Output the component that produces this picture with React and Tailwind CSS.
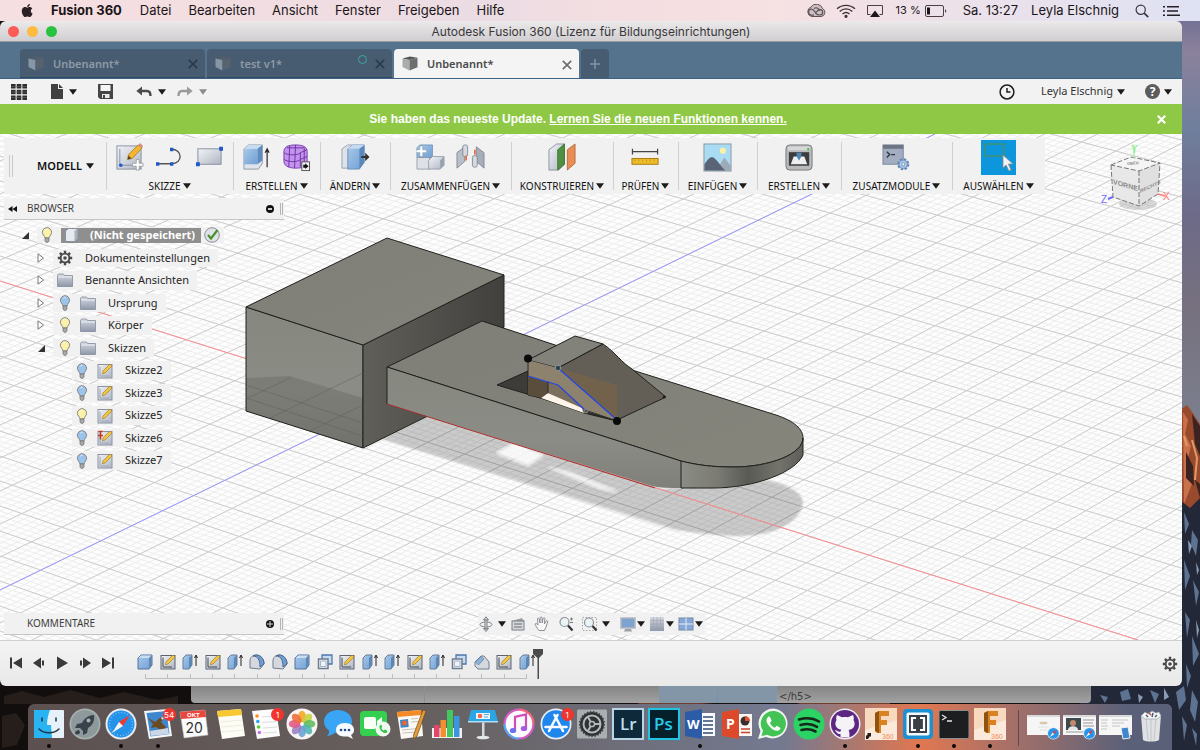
import React from "react";

const UI = "font-['Noto_Sans','Open_Sans',sans-serif]";
const MAC = "font-[Inter,'Liberation_Sans',sans-serif]";

function Caret({ className = "fill-[#1c1c1c]" }) {
  return (
    <svg viewBox="0 0 8 6" className={`w-2 h-1.5 shrink-0 ${className}`} aria-hidden="true">
      <path d="M0 0.3H8L4 5.8Z" />
    </svg>
  );
}

/* ------------------------------------------------------------ wallpaper */

function Wallpaper() {
  return (
    <svg className="absolute inset-0 h-full w-full" viewBox="0 0 1200 750" preserveAspectRatio="none" aria-hidden="true">
      <defs>
        <linearGradient id="sky" x1="0" y1="0" x2="0" y2="1">
          <stop offset="0" stopColor="#65688f" />
          <stop offset=".12" stopColor="#8b819c" />
          <stop offset=".3" stopColor="#6f7f9d" />
          <stop offset=".5" stopColor="#6d6a88" />
          <stop offset=".72" stopColor="#77717f" />
          <stop offset="1" stopColor="#7c808f" />
        </linearGradient>
      </defs>
      <rect width="1200" height="750" fill="#14100f" />
      <rect x="1170" width="30" height="430" fill="url(#sky)" />
      <path d="M1180 410L1187 405L1192 412L1200 424V520H1180Z" fill="#9a4a2c" />
      <path d="M1183 412l5 8-3 14 6 12-5 20 6 18-8 20z" fill="#c9714a" />
      <path d="M1192 414l8 12v30l-5-12zM1186 452l7 14 1 20-8-8zM1195 480l5 4v14z" fill="#3a2320" />
      <path d="M1192 440l5 18-2 22M1184 436l3 10" stroke="#e39a6a" strokeWidth="2" fill="none" />
      <path d="M1180 500L1190 508L1200 498V750H1080V680H1180Z" fill="#222838" />
      <path d="M1184 512l5 12-4 10zM1192 530l6 10-2 16-5-12zM1184 560l6 16-5 14zM1193 580l6 12-3 14zM1185 612l5 8-3 18zM1192 636l7 18-6 12zM1186 664l5 12-4 12zM1176 692l8-6 2 14-7 10zM1192 690l6 12-3 20-5-12zM1150 690l9 4-4 9zM1120 692l8-3 3 10-9 2zM1100 695l8 2-3 6zM1182 716l5 9-3 16zM1192 728l5 6-1 12z" fill="#5d7391" />
      <path d="M1188 540l4 6-3 8zM1196 562l3 8-2 5zM1188 596l4 8zM1196 620l3 10-2 8zM1184 650l4 5zM1190 680l4 6zM1138 694l5 3-4 6zM1164 688l5 9-5 3z" fill="#8a9cb4" />
      <path d="M0 686H192V706H0zM0 706H28V750H0z" fill="#120e0d" />
      <path d="M4 696l18-5 22 6 26-7 30 8 24-6 34 8 20-4v8H4zM2 716l14-3 9 12-8 20-15 3z" fill="#261e1b" />
      <path d="M640 703h60l40 3h-110zM800 703h90v3h-100z" fill="#6f3d2c" />
    </svg>
  );
}

/* ------------------------------------------------------------- menu bar */

function MenuBar() {
  const items = ["Datei", "Bearbeiten", "Ansicht", "Fenster", "Freigeben", "Hilfe"];
  return (
    <header className={`relative flex h-[21px] shrink-0 items-center bg-linear-to-r from-[#f6dfe1] via-[#ffe0dc] to-[#dfe2f3] text-[13px] text-[#1b1517] ${MAC}`}>
      <div className="absolute inset-0 bg-linear-to-r from-transparent via-[#e6dbe6]/80 via-40% to-transparent to-65%" />
      <nav className="relative flex items-center pl-5">
        <button aria-label="Apple" className="mr-4">
          <svg viewBox="0 0 24 24" className="size-[15px] fill-[#2b2023]" aria-hidden="true">
            <path d="M17.3 12.7c0-2.700 2.200-4 2.300-4.100-1.300-1.800-3.200-2.100-3.900-2.100-1.700-.2-3.200 1-4.100 1-.8 0-2.100-1-3.500-1-1.800 0-3.400 1-4.400 2.600-1.900 3.200-.5 8 1.300 10.700.9 1.300 2 2.700 3.400 2.700 1.300-.1 1.900-.9 3.500-.9s2.100.9 3.500.8c1.500 0 2.400-1.300 3.300-2.600 1-1.500 1.500-3 1.500-3-.1-.1-2.900-1.100-2.900-4.100zM14.700 4.800c.7-.9 1.200-2.100 1.100-3.400-1.100.1-2.400.7-3.200 1.600-.7.8-1.300 2.100-1.100 3.300 1.200.1 2.400-.6 3.200-1.500z" />
          </svg>
        </button>
        <button className="mr-[18px] font-bold">Fusion 360</button>
        <div className="flex gap-[17px]">
          {items.map((t) => (
            <button key={t}>{t}</button>
          ))}
        </div>
      </nav>
      <div className="relative ml-auto flex items-center pr-5">
        <svg viewBox="0 0 20 14" className="mr-2.5 h-3.5 w-5" fill="none" stroke="#5d5357" aria-hidden="true">
          <path d="M5.500 12.500a5 5 0 0 1-.5-9.500 6.500 6.500 0 0 1 11.500 1.500 4.200 4.200 0 0 1-1.500 8z" fill="#cdbfc2" strokeWidth="1" />
          <path d="M12 10.500c-3 0-3-5.500-7-5.500a3.200 3.200 0 0 0 0 6.200h3M8 4.500c3-2 5 .5 5.500 2.500M9 8c1 2 2 3.200 5 3a2.700 2.700 0 0 0 0-5.400c-3 0-3 3-5 3" strokeWidth="1.200" />
        </svg>
        <svg viewBox="0 0 20 14" className="mr-2.5 h-3.5 w-5" fill="none" stroke="#3c3336" strokeWidth="1.300" aria-hidden="true">
          <path d="M1 4.800C6 .1 14 .1 19 4.800M3.700 7.500c3.700-3.400 8.900-3.400 12.600 0M6.500 10.100c2.100-1.900 4.900-1.900 7 0" />
          <circle cx="10" cy="12.300" r="1" fill="#3c3336" />
        </svg>
        <svg viewBox="0 0 18 14" className="mr-3 h-3.5 w-[18px]" aria-hidden="true">
          <path d="M4.500 10.500H1.500V1.500h15v9h-3" fill="none" stroke="#4a4043" />
          <path d="M9 6.500l5 6.500H4z" fill="#1d1618" />
        </svg>
        <span className="mr-1 text-[11px]">13 %</span>
        <svg viewBox="0 0 22 12" className="mr-4 h-3 w-[22px]" aria-hidden="true">
          <rect x=".5" y=".5" width="18" height="11" rx="1.500" fill="none" stroke="#4a4043" />
          <rect x="2" y="2.500" width="3" height="7" fill="#1d1618" />
          <path d="M20 4v4l1.500-2z" fill="#4a4043" />
        </svg>
        <span className="mr-[13px]">Sa. 13:27</span>
        <button className="mr-4">Leyla Elschnig</button>
        <button aria-label="Suche" className="mr-3.5">
          <svg viewBox="0 0 14 14" className="size-3.5" fill="none" stroke="#3b3440" strokeWidth="1.200" aria-hidden="true">
            <circle cx="5.700" cy="5.700" r="4.600" />
            <path d="M9.200 9.200l4 4" strokeWidth="1.700" />
          </svg>
        </button>
        <button aria-label="Mitteilungen">
          <svg viewBox="0 0 17 12" className="h-3 w-[17px] fill-[#241f28]" aria-hidden="true">
            <path d="M0 1h2v1.500H0zM0 5.200h2v1.500H0zM0 9.500h2V11H0zM4 1h12v1.500H4zM4 5.200h11v1.500H4zM4 9.500h13V11H4z" />
          </svg>
        </button>
      </div>
    </header>
  );
}

/* -------------------------------------------------------- window chrome */

function TitleBar() {
  return (
    <div className={`relative flex h-[21px] shrink-0 items-center justify-center border-b border-[#9c9ba0] bg-linear-to-b from-[#ebe9ea] to-[#d0ced0] pt-0.5 text-[12px] text-[#39373a] ${MAC}`}>
      <div className="absolute inset-y-0 left-2 flex items-center gap-2">
        <button aria-label="Schließen" className="size-[11px] rounded-full bg-[#fc5b57]" />
        <button aria-label="Minimieren" className="size-[11px] rounded-full bg-[#fdbc40]" />
        <button aria-label="Maximieren" className="size-[11px] rounded-full bg-[#27c33f]" />
      </div>
      Autodesk Fusion 360 (Lizenz für Bildungseinrichtungen)
    </div>
  );
}

function TabCube({ active }) {
  return (
    <svg viewBox="0 0 16 15" className="h-[15px] w-4 shrink-0" aria-hidden="true">
      <path d="M.5 2.500L8 .5l7.500 1.300L7.500 4z" fill={active ? "#555656" : "#525f6d"} />
      <path d="M.5 2.500l7 1.500v10.500L.5 11z" fill={active ? "#a9abac" : "#8797a5"} />
      <path d="M7.500 4l8-2.200v9.500l-8 3.200z" fill={active ? "#6d6e6f" : "#56636f"} />
    </svg>
  );
}

function DocTab({ label, active, synced }) {
  return (
    <div className={`flex h-[29px] w-[185px] items-center rounded-t pr-[5px] pl-2 text-[11px] font-semibold ${UI} ${active ? "bg-[#f4f4f4] text-[#4a4a4a]" : "border-b border-[#2f4a63] bg-[#475c71] text-[#8e9ba7]"}`}>
      <TabCube active={active} />
      <button className="ml-[9px] flex-1 pt-0.5 text-left">{label}</button>
      {synced && <span className="mr-1.5 mb-2 size-[9px] rounded-full border-[1.5px] border-[#3ba79d]" />}
      <button aria-label={`${label} schließen`} className="px-0.5 pt-1 pb-0.5">
        <svg viewBox="0 0 10 10" className={`size-2.5 ${active ? "stroke-[#6e6e72]" : "stroke-[#2c3b4a]"}`} fill="none" strokeWidth="1.700" aria-hidden="true">
          <path d="M.8.8l8.400 8.400M9.200.8L.8 9.200" />
        </svg>
      </button>
    </div>
  );
}

function TabBar() {
  return (
    <div className="flex h-[37px] shrink-0 items-end gap-0.5 border-b border-[#3f6284] bg-[#56738e] pl-5">
      <DocTab label="Unbenannt*" />
      <DocTab label="test v1*" synced />
      <DocTab label="Unbenannt*" active />
      <button aria-label="Neuer Tab" className="flex h-[29px] w-7 items-center justify-center rounded-t bg-[#475c71]">
        <svg viewBox="0 0 10 10" className="size-2.5 stroke-[#8492a0]" strokeWidth="1.500" aria-hidden="true">
          <path d="M5 0v10M0 5h10" />
        </svg>
      </button>
    </div>
  );
}

function QuickBar() {
  return (
    <div className={`flex h-[25px] shrink-0 items-center bg-[#f2f2f2] pr-2.5 pl-[11px] text-[11px] text-[#333] ${UI}`}>
      <button aria-label="Datengruppe">
        <svg viewBox="0 0 16 16" className="size-4 fill-[#2e2e2e]" aria-hidden="true">
          <path d="M0 0h4.600v4.600H0zM5.700 0h4.600v4.600H5.700zM11.400 0H16v4.600h-4.600zM0 5.700h4.600v4.600H0zM5.700 5.700h4.600v4.600H5.700zM11.400 5.700H16v4.600h-4.600zM0 11.400h4.600V16H0zM5.700 11.400h4.600V16H5.700zM11.400 11.400H16V16h-4.600z" />
          <path d="M0 2h16v.6H0zM0 7.700h16v.6H0zM0 13.400h16v.6H0z" fill="#777" />
        </svg>
      </button>
      <button aria-label="Datei" className="ml-6 flex items-center gap-1.5">
        <svg viewBox="0 0 12 15" className="h-[15px] w-3" aria-hidden="true">
          <path d="M0 0h7v5h5v10H0z" fill="#404040" />
          <path d="M8 0l4 4H8z" fill="#404040" />
        </svg>
        <Caret />
      </button>
      <button aria-label="Speichern" className="ml-[21px]">
        <svg viewBox="0 0 15 15" className="size-[15px]" aria-hidden="true">
          <path d="M0 0h15v15H2l-2-2z" fill="#454545" />
          <path d="M2.500 1h10v6h-10z" fill="#f4f4f4" />
          <path d="M4 10h7.500v4H4z" fill="#e8e8e8" />
          <path d="M5 11h2v3H5z" fill="#454545" />
        </svg>
      </button>
      <button aria-label="Rückgängig" className="ml-[23px] flex items-center gap-1.5">
        <svg viewBox="0 0 16 12" className="h-3 w-4" fill="none" stroke="#4b4b4b" strokeWidth="2.400" aria-hidden="true">
          <path d="M3 5h8c2.500 0 3.500 2.500 3.500 5" />
          <path d="M6 .5L.3 5 6 9.500z" fill="#4b4b4b" stroke="none" />
        </svg>
        <Caret />
      </button>
      <button aria-label="Wiederherstellen" className="ml-[11px] flex items-center gap-1.5">
        <svg viewBox="0 0 16 12" className="h-3 w-4" fill="none" stroke="#9b9b9b" strokeWidth="2.400" aria-hidden="true">
          <path d="M13 5H5C2.500 5 1.500 7.500 1.500 10" />
          <path d="M10 .5L15.700 5 10 9.500z" fill="#9b9b9b" stroke="none" />
        </svg>
        <Caret className="fill-[#8b8b8b]" />
      </button>
      <button aria-label="Auftragsstatus" className="ml-auto">
        <svg viewBox="0 0 16 16" className="size-4" fill="none" stroke="#1e1e1e" strokeWidth="1.500" aria-hidden="true">
          <circle cx="8" cy="8" r="6.900" />
          <path d="M8 4v4h3.500" />
        </svg>
      </button>
      <button className="ml-[26px] flex items-center gap-1">
        Leyla Elschnig <Caret />
      </button>
      <button aria-label="Hilfe" className="ml-5 flex items-center gap-1">
        <span className="flex size-[15px] items-center justify-center rounded-full bg-[#5c5c5c] text-[12px] font-bold text-white">?</span>
        <Caret />
      </button>
    </div>
  );
}

function UpdateBanner() {
  return (
    <div className="relative flex h-[30px] shrink-0 items-center justify-center bg-[#8fc845] font-['Liberation_Sans',Arial,sans-serif] text-[12px] font-bold text-white">
      <p className="pr-[26px]">
        Sie haben das neueste Update.{" "}
        <a href="#neu" className="underline">
          Lernen Sie die neuen Funktionen kennen.
        </a>
      </p>
      <button aria-label="Hinweis schließen" className="absolute right-4">
        <svg viewBox="0 0 9 9" className="size-[9px]" stroke="#fff" strokeWidth="2.200" aria-hidden="true">
          <path d="M.8.8l7.400 7.400M8.200.8L.8 8.200" />
        </svg>
      </button>
    </div>
  );
}

/* --------------------------------------------------------------- canvas */

// Ground grid: each family starts on its axis and fans out slightly,
// since both converge towards the horizon.
const ALONG_X = { y: 281, slope: 0.3155, step: 25, fan: 0.003 };
const ALONG_Z = { y: 590, slope: -0.4877, step: 33, fan: -0.006 };

function gridLines({ y, slope, step, fan }, parts, from, to) {
  const out = [];
  for (let i = from * parts; i <= to * parts; i++) {
    const n = i / parts;
    const y0 = y + n * step;
    const y1 = y0 + (slope + n * fan) * 1182;
    out.push(`M0 ${y0.toFixed(1)}L1182 ${y1.toFixed(1)}`);
  }
  return out.join("");
}

function Scene() {
  return (
    <svg className="absolute inset-0 h-full w-full" viewBox="0 134 1182 506" preserveAspectRatio="xMidYMid slice" role="img" aria-label="3D-Modell">
      <defs>
        <linearGradient id="front" x1="0" y1="0" x2="0" y2="1">
          <stop offset="0" stopColor="#86877f" />
          <stop offset=".6" stopColor="#8b8c85" />
          <stop offset="1" stopColor="#7f8079" />
        </linearGradient>
        <linearGradient id="side" x1="0" y1="0" x2="1" y2="0">
          <stop offset="0" stopColor="#605f59" />
          <stop offset="1" stopColor="#41403d" />
        </linearGradient>
        <linearGradient id="top" x1="0" y1="0" x2="1" y2="1">
          <stop offset="0" stopColor="#7f7e77" />
          <stop offset="1" stopColor="#86857c" />
        </linearGradient>
        <linearGradient id="rim" x1="0" y1="0" x2="1" y2="0">
          <stop offset="0" stopColor="#8b8c84" />
          <stop offset=".3" stopColor="#7b7b74" />
          <stop offset=".55" stopColor="#5a5a55" />
          <stop offset=".8" stopColor="#73726b" />
          <stop offset="1" stopColor="#5f5e58" />
        </linearGradient>
        <filter id="soft" x="-5%" y="-5%" width="110%" height="110%">
          <feGaussianBlur stdDeviation="1.2" />
        </filter>
      </defs>
      <rect y="134" width="1182" height="506" fill="#fdfdfd" />
      <g fill="none">
        <path d={gridLines(ALONG_X, 5, -20, 16)} stroke="#ededed" />
        <path d={gridLines(ALONG_Z, 5, -16, 27)} stroke="#ededed" />
        <path d={gridLines(ALONG_X, 1, -20, 16)} stroke="#cdcdcd" />
        <path d={gridLines(ALONG_Z, 1, -16, 27)} stroke="#cdcdcd" />
      </g>
      <g filter="url(#soft)">
        <path d="M363 448L430 415L660 489L765 480C790 484 803 494 803 503C800 522 775 537 735 536C710 535 692 532 676 530L372 436Z" fill="#000" opacity=".2" />
        <path d="M497 453L515 443L543 455L528 465ZM548 467L570 473L618 492L600 488Z" fill="#fff" opacity=".85" />
      </g>
      <path d="M0 281L1138 640" stroke="#ff8f8f" />
      <path d="M0 590L935 134" stroke="#9a9aff" />

      <g stroke="#20201e" strokeWidth="1" strokeLinejoin="round">
        <path d="M246 307L363 345V448L246 411Z" fill="url(#front)" />
        <path d="M363 345L504 275V327L440 400L430 415L363 448Z" fill="url(#side)" />
        <path d="M387 238L504 275L363 345L246 307Z" fill="url(#top)" />
        <path d="M246 378L290 376L363 398V448L246 411Z" fill="#000" opacity=".1" stroke="none" />
        <path d="M246 385L363 423M246 398L363 436M246 399L290 378M270 418L363 373M310 431L363 405" stroke="#5f605a" opacity=".5" fill="none" />
        <path d="M387 367L482 321L552 344L632 370L776 415C794 421 803 429 803 438C803 454 770 467 733 467C712 467 697 465 681 461Z" fill="url(#top)" />
        <path d="M387 367L681 461V488C670 488 660 488 652 486L387 404Z" fill="url(#front)" stroke="none" />
        <path d="M387 404V367L681 461" fill="none" />
        <path d="M681 461C697 465 712 467 733 467C770 467 803 454 803 438V455C796 472 755 488 713 488H681Z" fill="url(#rim)" />
        <path d="M387 404L655 488" stroke="#a5302c" />
        <path d="M497 385L528 371V395L541 398L584 413L617 421Z" fill="#3d3c38" />
        <path d="M541 398L548 393L580 405L584 413Z" fill="#fdf4ea" stroke="none" />
        <path d="M528 376L548 382V393L541 398L528 395Z" fill="#5b4d3c" stroke="none" />
        <path d="M548 382L558 385L584 409L548 393Z" fill="#7b6f5e" stroke="none" />
        <path d="M528 360L575 336L603 344L558 368Z" fill="#82827a" />
        <path d="M558 368L603 344C615 352 622 363 632 369L666 397L617 420Z" fill="#635f57" />
      </g>
      <path d="M558 368L617 385V420Z" fill="#72624c" />
      <path d="M528 360L558 368L617 420L586 411L558 385L528 376Z" fill="#8d826d" />
      <path d="M528 376L558 385L585 410M558 368L617 420" fill="none" stroke="#2347e6" strokeWidth="1.300" />
      <path d="M528 360V376M585 410L617 421M548 382V393" stroke="#2b2a27" fill="none" />
      <circle cx="528" cy="358.500" r="4" fill="#0a0a0a" />
      <circle cx="617" cy="421" r="4" fill="#0a0a0a" />
      <circle cx="558" cy="368" r="2.800" fill="#33414e" stroke="#8d969c" />
      <circle cx="586" cy="411" r="2" fill="#555" stroke="#888" />
      <circle cx="664" cy="397" r="1.500" fill="#222" />
    </svg>
  );
}

function ViewCube() {
  return (
    <svg viewBox="1098 140 76 76" className="absolute top-1.5 right-2 size-[76px]" role="img" aria-label="Ansichtswürfel">
      <ellipse cx="1138" cy="204" rx="19" ry="6" fill="#000" opacity=".15" />
      <path d="M1111 165L1131 157L1160 163L1139 171Z" fill="#f5f5f5" />
      <path d="M1111 165L1139 171V206L1113 197Z" fill="#e8e8e8" />
      <path d="M1139 171L1160 163L1158 194L1139 206Z" fill="#e0e0e0" />
      <path d="M1111 165L1131 157L1160 163L1139 171ZM1111 165L1113 197L1139 206L1158 194L1160 163M1139 171V206" fill="none" stroke="#777" strokeDasharray="5 2" />
      <path d="M1134 145V158" stroke="#8af08a" />
      <path d="M1158 194L1165 196" stroke="#ff7b7b" strokeWidth="1.500" />
      <path d="M1113 197L1108 199" stroke="#6c6cff" strokeWidth="2" />
      <g fontFamily="Liberation Sans" fontSize="10">
        <text x="1131" y="153" fill="#7dec7d">Y</text>
        <text x="1163" y="200" fill="#ff7777">X</text>
        <text x="1101" y="203" fill="#6f6fff">Z</text>
      </g>
      <g fontFamily="Liberation Sans" fontWeight="bold" fill="#8a8a8a">
        <text transform="translate(1113 184) skewY(16)" fontSize="7">VORNE</text>
        <text transform="translate(1140 193) skewY(-25)" fontSize="5">RECHTS</text>
        <text transform="translate(1127 165) skewY(-4)" fontSize="4">OBEN</text>
      </g>
    </svg>
  );
}

/* --------------------------------------------------------------- ribbon */

function Gradients() {
  return (
    <svg className="absolute size-0" aria-hidden="true">
      <defs>
        <linearGradient id="steel" x1="0" y1="0" x2="1" y2="1">
          <stop offset="0" stopColor="#f2f4f7" />
          <stop offset="1" stopColor="#aeb5c2" />
        </linearGradient>
        <linearGradient id="blue" x1="0" y1="0" x2="1" y2="1">
          <stop offset="0" stopColor="#a9c9ea" />
          <stop offset="1" stopColor="#6f9fd2" />
        </linearGradient>
        <linearGradient id="folder" x1="0" y1="0" x2="0" y2="1">
          <stop offset="0" stopColor="#d6dae4" />
          <stop offset="1" stopColor="#8f97a8" />
        </linearGradient>
      </defs>
    </svg>
  );
}

const ribbonArt = {
  sketch: (
    <>
      <rect x="2" y="3" width="25" height="24" fill="url(#steel)" stroke="#8d93a0" />
      <path d="M5 6v17h14" fill="none" stroke="#8891a5" />
      <circle cx="6" cy="23" r="1.800" fill="#1e56d6" />
      <path d="M13 17l1-5L24 2l4 3-10 11z" fill="#f2b632" stroke="#a87818" strokeWidth=".8" />
      <path d="M24 2l4 3 1-2-3-3z" fill="#d98c8c" />
      <path d="M13 17l1-4 3 3z" fill="#59422a" />
      <path d="M18 21h4v-4h3v4h4v3h-4v4h-3v-4h-4z" fill="#fff" stroke="#8a8a8a" strokeWidth=".7" />
    </>
  ),
  line: (
    <>
      <path d="M3 21.500h14c12 0 12-15 0-15" fill="none" stroke="#555" strokeWidth="1.400" />
      <path d="M1 20h3.500v3.500H1zM15.500 20H19v3.500h-3.500zM15.500 5H19v3.500h-3.500z" fill="#1f58cf" />
    </>
  ),
  rect: (
    <>
      <rect x="3" y="6" width="24" height="16" fill="url(#steel)" stroke="#8a90a0" />
      <path d="M1 20h4v4H1zM25 4h4v4h-4z" fill="#1f58cf" />
    </>
  ),
  extrude: (
    <>
      <path d="M2 6l5-4h14v19l-4 6H2z" fill="#dfe3ea" stroke="#7c8798" strokeWidth=".8" />
      <path d="M2 6h14v16H2z" fill="url(#blue)" />
      <path d="M2 6l5-4h14l-5 4z" fill="#c6dcf2" />
      <path d="M16 6l5-4v16l-5 4z" fill="#5e8cbf" />
      <path d="M26 25V7M24 10l2-4 2 4" fill="none" stroke="#222" strokeWidth="1.200" />
    </>
  ),
  form: (
    <>
      <path d="M2 9c0-5 4-7 12-7s12 2 12 7v11c-2 6-8 6-12 6S2 25 2 19z" fill="#c493ee" stroke="#7a3fae" />
      <path d="M2 10c4 3 15 3 17 0l7-3M2 17c4 3 15 3 17 0l7-3M8 3l-1 22M14 2l-1 24M19 10v15M23 5v17M5 5h18" fill="none" stroke="#6e35a5" />
      <rect x="20.500" y="19.500" width="8" height="9" fill="#f3f3f3" stroke="#555" />
      <path d="M22 22.500h2V21l3.500 3-3.500 3v-1.500h-2z" fill="#111" />
    </>
  ),
  modify: (
    <>
      <path d="M1 6l6-4h4v24H1z" fill="#dfe3e9" stroke="#8a92a0" strokeWidth=".8" />
      <path d="M7 6l5-4h12v18l-5 7H7z" fill="url(#blue)" stroke="#5f83ad" strokeWidth=".8" />
      <path d="M19 6l5-4v18l-5 7z" fill="#5a88bc" />
      <path d="M7 6l5-4h12l-5 4z" fill="#c3daf1" />
      <path d="M21 13.500h4V10l4.500 4.500L25 19v-3.500h-4z" fill="#333" />
    </>
  ),
  assemble: (
    <>
      <path d="M1 5l3-3h13v13H1z" fill="url(#blue)" stroke="#6b8cb3" strokeWidth=".8" />
      <path d="M1 15h13v12H1z" fill="#dde1e7" stroke="#8a92a0" strokeWidth=".8" />
      <path d="M13 18l4-4h12v9l-4 4H13z" fill="url(#steel)" stroke="#8a92a0" strokeWidth=".8" />
      <path d="M25 18l4-4v9l-4 4z" fill="#9aa2b0" />
      <path d="M4 3h3v4h4v3H7v4H4v-4H0V7h4z" fill="#fff" stroke="#7f95b3" strokeWidth=".6" />
    </>
  ),
  joint: (
    <>
      <path d="M1 10l8-6v15l-8 7z" fill="#b9bfc8" stroke="#747b87" strokeWidth=".8" />
      <rect x="7" y="2" width="5" height="12" rx="2" fill="#d6dae0" stroke="#747b87" strokeWidth=".8" />
      <path d="M21 4l8 6v16l-8-7z" fill="#a7aeb9" stroke="#747b87" strokeWidth=".8" />
      <rect x="17" y="13" width="5" height="12" rx="2" fill="#d6dae0" stroke="#747b87" strokeWidth=".8" />
      <path d="M10.500 13v5M19.500 12V7" stroke="#ea6b45" strokeWidth="1.800" />
    </>
  ),
  construct: (
    <>
      <path d="M1 7l8-6h8v21l-6 6H1z" fill="url(#steel)" stroke="#79808c" strokeWidth=".8" />
      <path d="M10 7l7-6v21l-7 6z" fill="#4f9140" stroke="#3a6d30" strokeWidth=".8" />
      <path d="M20 7l8-6v20l-8 7z" fill="#e98d55" stroke="#a9602f" strokeWidth=".8" />
    </>
  ),
  measure: (
    <>
      <path d="M1 9h27M1.500 6v6M27.500 6v6" stroke="#444" strokeWidth="1.300" />
      <rect x="1" y="16" width="27" height="6" fill="#eebd2a" stroke="#a87a10" />
      <path d="M4 17v2M8 17v2M12 17v2M16 17v2M20 17v2M24 17v2" stroke="#c2921c" />
    </>
  ),
  image: (
    <>
      <rect x="1" y="1" width="28" height="28" fill="#a9dcf2" stroke="#8b98a5" />
      <circle cx="20.500" cy="8" r="3.200" fill="#fdf0a8" />
      <path d="M14 28l8-13 7 9v5H14z" fill="#9daab8" />
      <path d="M1.500 22C6 15 8 14 11 15c5 4 7 9 12 13.500H1.500z" fill="#5b6476" />
    </>
  ),
  print: (
    <>
      <rect x="1" y="2" width="27" height="26" rx="4" fill="#b9babb" stroke="#77797b" />
      <path d="M3 3.500h23v4H3z" fill="#d6d7d8" />
      <rect x="4" y="9.500" width="21" height="14" fill="#3c3d3f" />
      <path d="M6 22l3-8h11l3 8z" fill="#efefef" />
      <path d="M12 10h5v4l-2.500 4-2.500-4z" fill="#4f86b8" />
      <circle cx="24" cy="6.500" r="1.200" fill="#3dbb3a" />
    </>
  ),
  addins: (
    <>
      <rect x="1" y="2" width="21" height="20" fill="#a3adc1" stroke="#7f8aa0" />
      <rect x="1" y="2" width="21" height="4" fill="#6e7480" />
      <path d="M5 9l3 3-3 3M9.500 12h4" fill="none" stroke="#30343d" strokeWidth="1.400" />
      <circle cx="22" cy="22" r="5" fill="#a9c7e8" stroke="#5f82ad" strokeWidth="2.400" strokeDasharray="2.400 1.500" />
      <circle cx="22" cy="22" r="4.300" fill="#a9c7e8" stroke="#6f93bd" />
      <circle cx="22" cy="22" r="1.700" fill="#f1f1f1" stroke="#6f93bd" />
    </>
  ),
};

function Art({ name }) {
  return (
    <svg viewBox="0 0 30 30" className="size-[29px]" aria-hidden="true">
      {ribbonArt[name]}
    </svg>
  );
}

const groups = [
  { label: "SKIZZE", width: "w-[127px]", icons: ["sketch", "line", "rect"] },
  { label: "ERSTELLEN", width: "w-[87px]", icons: ["extrude", "form"] },
  { label: "ÄNDERN", width: "w-[70px]", icons: ["modify"] },
  { label: "ZUSAMMENFÜGEN", width: "w-[121px]", icons: ["assemble", "joint"] },
  { label: "KONSTRUIEREN", width: "w-[102px]", icons: ["construct"] },
  { label: "PRÜFEN", width: "w-[65px]", icons: ["measure"] },
  { label: "EINFÜGEN", width: "w-[79px]", icons: ["image"] },
  { label: "ERSTELLEN", width: "w-[84px]", icons: ["print"] },
  { label: "ZUSATZMODULE", width: "w-[111px]", icons: ["addins"] },
  { label: "AUSWÄHLEN", width: "w-[93px]", icons: ["select"] },
];

function Ribbon() {
  return (
    <div className={`mt-1 ml-1 flex h-14 w-fit bg-[#f1f1f1] text-[10px] text-[#111] ${UI}`}>
      <div className="flex w-[102px] items-center text-[11px]">
        <span className="ml-[5px] h-[22px] w-1 border-x border-[#c9c9c9]" />
        <button className="ml-6 flex items-center gap-1 font-semibold">
          MODELL <Caret />
        </button>
      </div>
      {groups.map((g, i) => (
        <div key={i} className={`relative flex flex-col items-center justify-between pt-0.5 ${g.width}`}>
          <span className="absolute top-1 bottom-1 left-0 w-px bg-[#cfcfcf]" />
          <div className="flex h-[35px] items-center gap-[11px]">
            {g.icons.map((name) =>
              name === "select" ? (
                <button key={name} aria-label="Auswählen" className="size-[35px] bg-[#0d96db]">
                  <svg viewBox="0 0 35 35" className="size-full" aria-hidden="true">
                    <rect x="4" y="4" width="19" height="12" fill="none" stroke="#5a8f3b" />
                    <path d="M22 15v13l3-3 3 6 2-1-2.500-6h4.500z" fill="#f3f3f3" stroke="#888" strokeWidth=".8" />
                  </svg>
                </button>
              ) : (
                <button key={name} aria-label={name}>
                  <Art name={name} />
                </button>
              )
            )}
          </div>
          <button className="flex items-center gap-0.5 leading-4">
            {g.label} <Caret />
          </button>
        </div>
      ))}
    </div>
  );
}

/* -------------------------------------------------------- browser panel */

function Bulb({ on }) {
  return (
    <svg viewBox="0 0 12 16" className="h-4 w-3 shrink-0" aria-hidden="true">
      <path d="M6 .7a4.600 4.600 0 0 0-4.600 4.600c0 2.200 2.100 3.200 2.600 5.700h4c.5-2.500 2.600-3.500 2.600-5.700A4.600 4.600 0 0 0 6 .7z" fill={on ? "#fbf1a9" : "#9cc3ea"} stroke="#7c7c78" strokeWidth=".9" />
      <path d="M4.500 3a2 2 0 0 1 2-.8" stroke="#fff" fill="none" />
      <path d="M4 11h4v3l-1 1.300H5L4 14z" fill="#aaa" stroke="#6e6e6e" strokeWidth=".7" />
    </svg>
  );
}

function Folder() {
  return (
    <svg viewBox="0 0 16 14" className="h-3.5 w-4 shrink-0" aria-hidden="true">
      <path d="M.5 2.500l1-1.500h5l1 1.500h8v11H.5z" fill="url(#folder)" stroke="#848c9d" strokeWidth=".8" />
      <path d="M1 4h14" stroke="#eef0f5" />
    </svg>
  );
}

function SketchIcon({ broken, edge = "#8b919e" }) {
  return (
    <svg viewBox="0 0 16 16" className="size-4 shrink-0" aria-hidden="true">
      <rect x="1" y="1.500" width="14" height="13.500" fill="url(#steel)" stroke={edge} />
      <path d="M3 3.500v9.500h9" fill="none" stroke={edge === "#8b919e" ? "#9ba5b8" : "#3d4654"} />
      <path d="M5.500 11l.5-3 7-7 2 2-7 7z" fill="#f4c63a" stroke="#9a7426" strokeWidth=".6" />
      {broken && <path d="M1.500 1.500h4M3.500 1.500v3.500M1 5.500h5M3.500 5.500v4" stroke="#c93822" strokeWidth="1.500" />}
    </svg>
  );
}

function Gear({ className = "size-4" }) {
  return (
    <svg viewBox="0 0 16 16" className={`${className} shrink-0`} aria-hidden="true">
      <g stroke="#4a4a4a" strokeWidth="2.400">
        <path d="M8 .8v14.400M.8 8h14.400M2.900 2.900l10.200 10.200M13.100 2.900L2.900 13.100" />
      </g>
      <circle cx="8" cy="8" r="5.300" fill="#4a4a4a" />
      <circle cx="8" cy="8" r="3.400" fill="#f1f1f1" />
      <circle cx="8" cy="8" r="1.800" fill="#4a4a4a" />
    </svg>
  );
}

function Twisty({ open }) {
  return (
    <button aria-label={open ? "Zuklappen" : "Aufklappen"} className="shrink-0">
      <svg viewBox="0 0 8 10" className="h-2.5 w-2" aria-hidden="true">
        {open ? <path d="M8 2v7H1z" fill="#333" /> : <path d="M1 .8v8.400L6.500 5z" fill="#fff" stroke="#777" />}
      </svg>
    </button>
  );
}

const tree = [
  { label: "Dokumenteinstellungen", icon: "gear", twisty: true },
  { label: "Benannte Ansichten", icon: "folder", twisty: true },
  { label: "Ursprung", icon: "folder", twisty: true, bulb: "off" },
  { label: "Körper", icon: "folder", twisty: true, bulb: "on" },
  { label: "Skizzen", icon: "folder", twisty: true, open: true, bulb: "on" },
  { label: "Skizze2", icon: "sketch", bulb: "off" },
  { label: "Skizze3", icon: "sketch", bulb: "off" },
  { label: "Skizze5", icon: "sketch", bulb: "on" },
  { label: "Skizze6", icon: "sketch", bulb: "off", broken: true },
  { label: "Skizze7", icon: "sketch", bulb: "off" },
];

function PanelHead({ title, children, collapse }) {
  return (
    <div className={`flex h-[22px] w-[280px] items-center border-b border-[#c6c6c6] bg-[#f1f1f1] text-[10px] text-[#3e3e3e] ${UI}`}>
      <span className="w-[23px] pl-1">
        {collapse && (
          <svg viewBox="0 0 9 6" className="h-1.5 w-[9px]" aria-hidden="true">
            <path d="M4.500 0v6L0 3zM9 0v6L4.500 3z" fill="#111" />
          </svg>
        )}
      </span>
      <h2 className="flex-1">{title}</h2>
      <button aria-label={`${title} umschalten`} className="mr-1.5 flex size-2 items-center justify-center rounded-full bg-[#111]">
        {children}
      </button>
      <span className="mr-px h-3 w-[3px] border-x border-[#b5b5b5]" />
    </div>
  );
}

function Browser() {
  return (
    <section className={`mt-1 text-[11px] text-[#262626] ${UI}`}>
      <div className="ml-1">
        <PanelHead title="BROWSER" collapse>
          <span className="h-0.5 w-1 bg-[#ccc]" />
        </PanelHead>
      </div>
      <ul className="mt-1 grid h-[248px] auto-rows-fr">
        <li className="flex items-center">
          <span className="ml-[21px] flex">
            <Twisty open />
          </span>
          <div className="ml-2 flex items-center bg-[#f1f1f1] px-1">
            <Bulb on />
            <div className="ml-2 flex h-[15px] w-[140px] items-center bg-[#8f8f8f] pl-1 font-bold text-white">
              <svg viewBox="0 0 13 14" className="h-3.5 w-[13px]" aria-hidden="true">
                <path d="M.5 3l3-2.500h9v10l-3 3h-9z" fill="#e6eaf0" stroke="#7b8594" strokeWidth=".8" />
                <path d="M9.500 3l3-2.500v10l-3 3z" fill="#a8b1bf" />
              </svg>
              <span className="ml-3">(Nicht gespeichert)</span>
            </div>
            <svg viewBox="0 0 16 16" className="ml-[3px] size-4" aria-hidden="true">
              <circle cx="8" cy="8" r="7.300" fill="#dfe3e8" stroke="#8b9099" />
              <path d="M4 8l3 3.500L13.500 3" fill="none" stroke="#4b8f2c" strokeWidth="2.200" />
            </svg>
          </div>
        </li>
        {tree.map((n) => (
          <li key={n.label} className={`flex items-center ${n.twisty ? "pl-[37px]" : "pl-[62px]"}`}>
            {n.twisty && <Twisty open={n.open} />}
            <div className={`flex items-center bg-[#f1f1f1] py-px pr-2 ${n.twisty ? "ml-2 pl-1" : "ml-2.5 pl-1"}`}>
              {n.bulb && (
                <span className={n.twisty ? "mr-[9px] ml-0.5" : "mr-[9px]"}>
                  <Bulb on={n.bulb === "on"} />
                </span>
              )}
              {n.icon === "gear" && <Gear />}
              {n.icon === "folder" && <Folder />}
              {n.icon === "sketch" && <SketchIcon broken={n.broken} />}
              <span className="ml-3">{n.label}</span>
            </div>
          </li>
        ))}
      </ul>
    </section>
  );
}

/* ------------------------------------------------------ navigation bars */

function NavBar() {
  return (
    <div className="mr-1 flex h-[22px] items-center bg-[#f1f1f1]/90 pr-0.5" role="toolbar" aria-label="Navigation">
      <button aria-label="Orbit" className="flex items-center gap-1">
        <svg viewBox="0 0 16 16" className="size-4" fill="none" stroke="#7f8388" aria-hidden="true">
          <ellipse cx="8" cy="8.500" rx="6" ry="2.500" />
          <path d="M7 3v10h2V3M5.500 4L8 .8 10.500 4zM5.500 12.500L8 15.500l2.500-3z" fill="#d9dbdd" />
        </svg>
        <Caret />
      </button>
      <button aria-label="Ansehen" className="ml-1">
        <svg viewBox="0 0 16 16" className="size-4" aria-hidden="true">
          <path d="M2 5l10-3 1 2H14v9H2z" fill="#9b9fa5" />
          <rect x="2" y="5" width="12" height="9" fill="#d5d8db" stroke="#7c8086" />
          <path d="M4 8h8M4 11h8" stroke="#8d9197" strokeWidth="1.500" />
        </svg>
      </button>
      <button aria-label="Pan" className="ml-2">
        <svg viewBox="0 0 16 16" className="size-4" fill="#f8f8f8" stroke="#8b8f94" strokeLinejoin="round" aria-hidden="true">
          <path d="M5 14.500C3 12 1.500 9.500 1 8c.8-1 2-.4 3 1L3.500 3c0-1 1.500-1.200 1.800 0L6 7 6.200 1.800c.1-1.200 1.700-1.200 1.800 0L8.200 7l1-4.600c.3-1 1.800-.8 1.700.4L10.400 8l1.800-3c.6-.8 1.900-.2 1.500.9L12 11l-1.500 3.500z" />
        </svg>
      </button>
      <button aria-label="Zoom" className="ml-2">
        <svg viewBox="0 0 16 16" className="size-4" fill="none" aria-hidden="true">
          <circle cx="6.500" cy="6" r="4.500" fill="#eaf3f6" stroke="#8b9298" strokeWidth="1.200" />
          <path d="M10 9.500l4.500 5" stroke="#333" strokeWidth="2.200" />
          <path d="M12 3h3M13.500 1.500v3M12 6.500h3" stroke="#777" />
        </svg>
      </button>
      <button aria-label="Zoomfenster" className="ml-2 flex items-center gap-1">
        <svg viewBox="0 0 16 16" className="size-4" fill="none" aria-hidden="true">
          <path d="M.5 1.500h14v13H.5z" stroke="#aaa" strokeDasharray="1.500 1.500" />
          <circle cx="7" cy="6.500" r="4.500" fill="#eaf3f6" stroke="#8b9298" strokeWidth="1.200" />
          <path d="M10.500 10l4 4.500" stroke="#333" strokeWidth="2.200" />
        </svg>
        <Caret />
      </button>
      <button aria-label="Anzeige" className="ml-2.5 flex items-center gap-px">
        <svg viewBox="0 0 16 16" className="size-4" aria-hidden="true">
          <rect x="1" y="2" width="14" height="10" fill="#7fa3d0" stroke="#b4b8bd" strokeWidth="1.500" />
          <path d="M5 13h6l1 2.500H4z" fill="#9da1a7" />
        </svg>
        <Caret />
      </button>
      <button aria-label="Raster" className="ml-1 flex items-center gap-px">
        <svg viewBox="0 0 16 16" className="size-4" aria-hidden="true">
          <rect x="1" y="1" width="14" height="14" fill="url(#folder)" />
          <path d="M1 4.500h14M1 8h14M1 11.500h14M4.500 1v14M8 1v14M11.500 1v14" stroke="#a0a5ad" strokeWidth=".6" />
        </svg>
        <Caret />
      </button>
      <button aria-label="Ansichtsfenster" className="ml-1 flex items-center gap-px">
        <svg viewBox="0 0 16 16" className="size-4" aria-hidden="true">
          <rect x="1" y="2" width="14" height="12" fill="#86a8d6" stroke="#7388a8" />
          <path d="M8 2v12M1 8h14" stroke="#e8eef7" strokeWidth="1" />
        </svg>
        <Caret />
      </button>
    </div>
  );
}

const featureArt = {
  box: (
    <>
      <path d="M1 4l3-3h11v10l-3 4H1z" fill="url(#blue)" stroke="#54739a" />
      <path d="M1.500 4L4 1.500h10.500L12 4z" fill="#c9def3" />
      <path d="M12 4l2.500-2.500v9.300L12 14.500z" fill="#5d86b5" />
    </>
  ),
  ext: (
    <>
      <path d="M1 4l3-3h6v10l-3 4H1z" fill="url(#blue)" stroke="#6b7f99" />
      <path d="M7 4l3-3v10l-3 4z" fill="#5d86b5" />
      <path d="M14 12V2M12.500 4L14 1l1.500 3" stroke="#222" fill="none" />
    </>
  ),
  fillet: (
    <>
      <path d="M1 14V7c0-4 3-6 6-6 5 0 8 4 8 9l-4 5z" fill="#d5d9df" stroke="#6f7c8e" />
      <path d="M4 2c5 0 7 4 7 11l4-3C15 4 11 1 7 1z" fill="#6f9fd2" stroke="#48688f" />
    </>
  ),
  pattern: (
    <>
      <path d="M5 1h10v9H5z" fill="#c5dbf1" stroke="#4c77ad" strokeWidth="1.300" />
      <path d="M1.500 5h9.500v9.500H1.500z" fill="#f2f2f2" stroke="#6f7c8e" strokeWidth="1.500" />
      <path d="M3.500 7h5.500v5.500H3.500z" stroke="#7f9cc0" fill="none" strokeWidth=".7" />
    </>
  ),
  chamfer: (
    <>
      <path d="M1 8l6-6h3l5 6v7H4l-3-3z" fill="#d5d9df" stroke="#6f7c8e" />
      <path d="M1.500 8L7 2.500l3 2.500-5.500 6z" fill="#8fb2d9" stroke="#5d80aa" strokeWidth=".7" />
    </>
  ),
};

const history = ["box", "sk", "ext", "sk", "ext", "fillet", "fillet", "box", "pattern", "sk", "ext", "ext", "sk", "ext", "pattern", "chamfer", "sk", "ext"];

function Timeline() {
  const controls = [
    ["Zum Anfang", "M1 1.500h2v11H1zM13 1.500v11L4 7z"],
    ["Schritt zurück", "M9 1.500v11L1 7zM10 4.500h2v5h-2z"],
    ["Abspielen", "M2 .5v13L13 7z"],
    ["Schritt vor", "M5 1.500v11L13 7zM2 4.500h2v5H2z"],
    ["Zum Ende", "M1 1.500v11L10 7zM11 1.500h2v11h-2z"],
  ];
  return (
    <footer className="flex h-[46px] shrink-0 items-center border-t border-[#d0d0d0] bg-linear-to-b from-[#f3f3f3] to-[#e9e9e9] pr-1 pl-[9px]">
      <div className="mb-0.5 flex gap-[9px]">
        {controls.map(([label, d]) => (
          <button key={label} aria-label={label} className="flex">
            <svg viewBox="0 0 14 14" className="size-3.5 fill-[#3a3a3a]" aria-hidden="true">
              <path d={d} />
            </svg>
          </button>
        ))}
      </div>
      <ol className="mt-1.5 ml-[19px] grid w-[404px] grid-cols-18">
        {history.map((f, i) => (
          <li key={i} className="flex flex-col items-center">
            <button aria-label={`Konstruktionselement ${i + 1}`}>
              {f === "sk" ? (
                <SketchIcon edge="#5b6470" />
              ) : (
                <svg viewBox="0 0 16 16" className="size-4" aria-hidden="true">
                  {featureArt[f]}
                </svg>
              )}
            </button>
            <span className="mt-1 h-1 w-px bg-[#bdbdbd]" />
            <span className={`h-px bg-[#bdbdbd] ${i === 0 ? "w-1/2 self-end" : i === 17 ? "w-1/2 self-start" : "w-full"}`} />
          </li>
        ))}
      </ol>
      <svg viewBox="0 0 10 30" className="-ml-[5px] h-[30px] w-2.5 fill-[#4c4c4c]" aria-hidden="true">
        <path d="M0 0h10v5L6 9v21H4.500V9L0 5z" />
      </svg>
      <button aria-label="Zeitleisten-Einstellungen" className="ml-auto">
        <Gear className="size-4" />
      </button>
    </footer>
  );
}

/* ----------------------------------------------------------------- dock */

const compass = (
  <>
    <circle cx="16" cy="16" r="15.500" fill="#e6eaee" />
    <circle cx="16" cy="16" r="13.500" fill="#2593ea" />
    <circle cx="16" cy="16" r="11.500" fill="none" stroke="#a9d9fb" strokeDasharray="1 2" />
    <path d="M25 7L18 18l-4-4z" fill="#f0392f" />
    <path d="M7 25l7-11 4 4z" fill="#f6f6f6" />
  </>
);

const fusion = (
  <>
    <rect width="32" height="32" fill="#f7d9c0" />
    <path d="M0 22L32 12V32H0z" fill="#fbeadb" />
    <path d="M10 5l4-2h10v5h-8v4h6v5h-6v8h-4l-2-2z" fill="#d98221" />
    <path d="M10 5l4-2v22l-4-2z" fill="#8f5210" />
    <text x="17" y="31" fontFamily="Liberation Sans" fontSize="7" fill="#ec8a5a">360</text>
  </>
);

const dockApps = [
  { name: "Finder", dot: true, art: (
    <>
      <rect x="1" y="2" width="30" height="28" rx="1" fill="#e7f1f9" />
      <path d="M2 2h15c-2 5-3 10-3 15h4l1 13H2a1 1 0 0 1-1-1V3a1 1 0 0 1 1-1z" fill="#28b3f3" />
      <path d="M9 10v3M23 10v3M6 21c5 5 15 5 20 0" stroke="#213543" strokeWidth="1.500" fill="none" strokeLinecap="round" />
    </>
  ) },
  { name: "Launchpad", art: (
    <>
      <circle cx="16" cy="16" r="15.500" fill="#a5afb1" />
      <circle cx="16" cy="16" r="13.800" fill="#8e999c" />
      <path d="M25 7c-6 0-10 4-12 8l-5 1-2 4 5 0 3 3 0 4 4-2 1-5c4-2 7-7 6-13z" fill="#39424a" />
      <circle cx="19.500" cy="12.500" r="2" fill="#a9b3b5" />
      <path d="M6 26c0-3 2-4 4-4l1 2c0 2-2 3-5 2z" fill="#39424a" />
    </>
  ) },
  { name: "Safari", dot: true, art: compass },
  { name: "Mail", dot: true, badge: "54", art: (
    <>
      <path d="M2 3l24-2 4 27-23 3z" fill="#f5f6f7" />
      <path d="M4.500 5l20-2 3 23-19 2.500z" fill="#3f87cc" />
      <path d="M6 10l7 4 6-5 3 1-3 4 5 5-3 5-7-5-5 1 2-4z" fill="#6b4a22" />
      <path d="M19 9l3 1-2 2z" fill="#f5f0e0" />
      <path d="M8 23l18-3 1 6-18 2z" fill="#cbd7e4" />
    </>
  ) },
  { name: "Kalender", art: (
    <>
      <path d="M2 4l25-2 3 25-24 3z" fill="#fbfbfb" stroke="#bbb" strokeWidth=".6" />
      <path d="M2 4l25-2 1 7-25 2z" fill="#e9463d" />
      <text x="9" y="9" fontFamily="Liberation Sans" fontWeight="bold" fontSize="6" fill="#fff">OKT</text>
      <text x="7.500" y="25" fontFamily="Inter" fontSize="14" fill="#333">20</text>
    </>
  ) },
  { name: "Notizen", art: (
    <>
      <path d="M3 3l24-2 4 27-23 3z" fill="#fdfcf5" />
      <path d="M3 3l24-2 1 6-24 2z" fill="#f8c832" />
      <path d="M6 14l22-2M7 19l22-2M7.500 24l22-2" stroke="#e6e3d4" strokeWidth=".7" />
    </>
  ) },
  { name: "Erinnerungen", badge: "1", art: (
    <>
      <path d="M2 3l24-2 4 27-23 3z" fill="#fcfcfc" />
      <circle cx="7" cy="8" r="1.800" fill="#ff8b1f" />
      <circle cx="7.800" cy="13.500" r="1.800" fill="#27a4f5" />
      <circle cx="8.600" cy="19" r="1.800" fill="#4fd12d" />
      <circle cx="9.400" cy="24.500" r="1.800" fill="#c76ee0" />
      <path d="M12 9l13-1M12 14.500l14-1M13 20l14-1M13 25l14-1" stroke="#ddd" />
    </>
  ) },
  { name: "Fotos", art: (
    <>
      <circle cx="16" cy="16" r="15.500" fill="#f7f5f3" />
      {["#f7a521", "#c5d13a", "#63bb5b", "#4fb5b0", "#6a9fd8", "#9d7fc0", "#e0578a", "#ef6b3a"].map((c, i) => (
        <ellipse key={c} cx="16" cy="8.500" rx="3.900" ry="5.800" fill={c} opacity=".88" transform={`rotate(${i * 45} 16 16)`} />
      ))}
    </>
  ) },
  { name: "Nachrichten", art: (
    <>
      <path d="M15 2c8 0 14 5 14 11.500S23 25 15 25l-3-.3C9 27 6 28 4 28c2-2 2.500-4 2-5.500C2.500 20 1 17 1 13.500 1 7 7 2 15 2z" fill="#3ba5f5" />
      <path d="M22 15c6 0 9 3 9 7 0 2-1 4-3 5l2 4-5-2.500C18 29 13 27 13 22c0-4 3-7 9-7z" fill="#f8fbff" />
      <circle cx="18" cy="22" r="1.300" fill="#234c86" /><circle cx="22" cy="22" r="1.300" fill="#234c86" /><circle cx="26" cy="22" r="1.300" fill="#234c86" />
    </>
  ) },
  { name: "FaceTime", art: (
    <>
      <rect x="1" y="3" width="27" height="25" rx="4" fill="#35d04f" />
      <rect x="5" y="9" width="12" height="12" rx="2" fill="#f7fff7" />
      <path d="M18 13l5-4v12l-5-3z" fill="#f7fff7" />
      <circle cx="24" cy="21" r="7.500" fill="#eefaf0" />
      <path d="M20.500 18c-.5 4 3.500 7.500 7 7l1-2-2.500-1.500-1.300 1c-1.300-.6-2-1.400-2.400-2.500l1-1.300L22 16.500z" fill="#35c04b" />
    </>
  ) },
  { name: "Pages", art: (
    <>
      <path d="M2 4l24-2 2 26-22 3z" fill="#fbf8f3" />
      <path d="M2 4l24-2 .5 5-24 2z" fill="#f38b27" />
      <path d="M5 12l8-1 .7 8-8 .8z" fill="#3b87c9" /><circle cx="9.500" cy="15" r="2.500" fill="#f0652b" />
      <path d="M16 11l7-.6M16.300 14l7-.6M7 22l16-1.500M7.500 25l14-1" stroke="#c6c2bb" />
      <path d="M28 2l3 1-9 25-3 3-.5-4z" fill="#e59b3a" stroke="#6d4717" strokeWidth=".7" />
    </>
  ) },
  { name: "Numbers", art: (
    <>
      <path d="M1 20h30v10H1z" fill="#f1f1f1" />
      <rect x="3" y="17" width="5.500" height="12" fill="#e2466a" /><rect x="9.500" y="12" width="5.500" height="17" fill="#f0902f" />
      <rect x="16" y="2" width="6" height="27" fill="#43c75f" /><rect x="23" y="8" width="5.500" height="21" fill="#3b95df" />
    </>
  ) },
  { name: "Keynote", art: (
    <>
      <path d="M4 2h24l3 12H1z" fill="#2ba5e6" />
      <path d="M1 13h30v1.500H1z" fill="#b4dff5" />
      <path d="M9 5h14v6H9z" fill="#e9f6fd" /><circle cx="13" cy="8" r="2.300" fill="#f06a4f" />
      <path d="M17 6.500h5M17 9h4" stroke="#5ba8d0" />
      <path d="M15 14.500h2.500V28H15z" fill="#d4dadf" />
      <ellipse cx="16" cy="29.500" rx="6.500" ry="1.800" fill="#e4e8eb" />
    </>
  ) },
  { name: "iTunes", art: (
    <>
      <circle cx="16" cy="16" r="15.500" fill="#d65cc5" />
      <path d="M16 .5A15.500 15.500 0 0 1 31.500 16H16z" fill="#f4627b" />
      <path d="M.5 16A15.500 15.500 0 0 0 16 31.500V16z" fill="#56a6f2" />
      <circle cx="16" cy="16" r="13.300" fill="#fbfbfd" />
      <path d="M12 22V9l11-2.500V20" fill="none" stroke="#d04fb5" strokeWidth="2.200" />
      <ellipse cx="10" cy="22.500" rx="3.200" ry="2.600" fill="#6b6ff0" /><ellipse cx="21" cy="20.500" rx="3.200" ry="2.600" fill="#a55be0" />
    </>
  ) },
  { name: "App Store", badge: "1", art: (
    <>
      <circle cx="16" cy="16" r="15.500" fill="#e6eef6" />
      <circle cx="16" cy="16" r="13.800" fill="#1f86ee" />
      <path d="M17.500 7L9 23M14.500 7L23 23M5.500 19h21" stroke="#f7fbff" strokeWidth="2.600" strokeLinecap="round" />
    </>
  ) },
  { name: "Systemeinstellungen", art: (
    <>
      <rect x="1" y="1.500" width="30" height="29" rx="1.500" fill="#a9afb1" />
      <circle cx="16" cy="16" r="12" fill="#2f3133" />
      <circle cx="16" cy="16" r="12" fill="none" stroke="#3c3e40" strokeWidth="2" strokeDasharray="1.500 1.500" />
      <circle cx="16" cy="16" r="8.500" fill="none" stroke="#b5b9bb" strokeWidth="2" />
      <circle cx="16" cy="16" r="2.600" fill="none" stroke="#b5b9bb" strokeWidth="1.500" />
      <path d="M18.500 16h6M14.700 18.200l-3 5M14.700 13.800l-3-5" stroke="#b5b9bb" strokeWidth="2" />
    </>
  ) },
  { name: "Lightroom", art: (
    <>
      <rect x="1" y="1" width="30" height="30" fill="#0e2a3a" stroke="#b7d5e6" strokeWidth="2" />
      <text x="8" y="22" fontFamily="Open Sans" fontWeight="600" fontSize="17" fill="#c0dced">Lr</text>
    </>
  ) },
  { name: "Photoshop", art: (
    <>
      <rect x="1" y="1" width="30" height="30" fill="#06202b" stroke="#1fc6e4" strokeWidth="2" />
      <text x="6" y="22" fontFamily="Open Sans" fontWeight="600" fontSize="17" fill="#25cdee">Ps</text>
    </>
  ) },
  { name: "Word", dot: true, art: (
    <>
      <path d="M16 5h15v23H16z" fill="#f7f9fc" />
      <path d="M19 9h10M19 13h10M19 17h10M19 21h10M19 25h10" stroke="#344c73" strokeWidth="1.400" />
      <path d="M1 4l17-3v30L1 28z" fill="#2c5ba8" />
      <text x="3" y="21" fontFamily="Open Sans" fontWeight="bold" fontSize="13" fill="#fff">W</text>
    </>
  ) },
  { name: "PowerPoint", art: (
    <>
      <path d="M16 6h15v22H16z" fill="#f9f6f4" />
      <circle cx="24" cy="13" r="4.500" fill="#33302f" /><path d="M24 13V8a5 5 0 0 1 5 5z" fill="#e0512f" />
      <path d="M20 21h9M20 24.500h9" stroke="#c8452a" strokeWidth="1.500" />
      <path d="M1 4l17-3v30L1 28z" fill="#dc4a2b" />
      <text x="5" y="21" fontFamily="Open Sans" fontWeight="bold" fontSize="14" fill="#fff">P</text>
    </>
  ) },
  { name: "WhatsApp", art: (
    <>
      <path d="M16 .5a15 15 0 1 1-7 28.500L1 31l2.500-8A15 15 0 0 1 16 .5z" fill="#f2f4f2" />
      <path d="M16 3a12.700 12.700 0 1 1-6 23.800L4.500 28 6 22.800A12.700 12.700 0 0 1 16 3z" fill="#43c353" />
      <path d="M11 9c-3 3-1 7 2 10s7 5.500 10 2.500c1-1.200.5-2-3.300-3.800l-1.800 2c-2.500-1-4-2.500-5-5l1.700-1.600C13.300 8.800 12.300 8 11 9z" fill="#fff" />
    </>
  ) },
  { name: "Spotify", art: (
    <>
      <circle cx="16" cy="16" r="15.500" fill="#2bd365" />
      <path d="M6 11.500c7-2 14-1.500 20 2M7.500 17c6-1.600 12-1 16.500 1.800M8.500 22c5-1.200 10-.8 14 1.500" fill="none" stroke="#15281b" strokeWidth="2.600" strokeLinecap="round" />
    </>
  ) },
  { name: "GitHub", dot: true, art: (
    <>
      <circle cx="16" cy="16" r="15.500" fill="#efe9f3" />
      <circle cx="16" cy="16" r="14" fill="#5c2783" />
      <path d="M8 7l5 2.300c2-.5 4-.5 6 0L24 7c1 2 1 4 .5 5 2.500 4 1 9.500-5 10 1 1.500 1 3 1 7.500h-9V26c-4 .5-4-3-6-3.500 3-1 3 2 6 1 0-.8.400-1.300 1-1.700-6-.8-7.500-6-5-9.800C7 11 7 9 8 7z" fill="#f6f3f8" />
    </>
  ) },
  { name: "Fusion 360 Alias", art: (
    <>
      {fusion}
      <path d="M1 31v-3l2-2-1-1h4v4l-1-1-2 3z" fill="#1d1d1d" />
    </>
  ) },
  { name: "Brackets", dot: true, art: (
    <>
      <rect x="1" y="1" width="30" height="30" rx="4" fill="#1d8fd3" />
      <rect x="4.500" y="4.500" width="23" height="23" rx="2" fill="#f6f9fb" />
      <rect x="7" y="7" width="18" height="18" fill="#3a4045" />
      <path d="M14 10h-4v12h4M18 10h4v12h-4" fill="none" stroke="#fff" strokeWidth="2.200" />
    </>
  ) },
  { name: "Terminal", dot: true, art: (
    <>
      <rect x="1" y="2.500" width="30" height="28" rx="1.500" fill="#1d1e1f" stroke="#8e8e8e" />
      <path d="M4 7l4 2.500L4 12M9 13h5" fill="none" stroke="#e8e8e8" strokeWidth="1.300" />
    </>
  ) },
  { name: "Fusion 360", dot: true, art: fusion },
];

function DockIcon({ app }) {
  return (
    <button aria-label={app.name} className="relative flex h-[46px] w-8 flex-col items-center pt-1">
      <svg viewBox="0 0 32 32" className="size-8 shrink-0" aria-hidden="true">
        {app.art}
      </svg>
      {app.dot && <span className="mt-1 size-1 shrink-0 rounded-full bg-[#0c0a0a]" />}
      {app.badge && (
        <span className={`absolute top-1 -right-0.5 flex size-[13px] items-center justify-center rounded-full bg-[#f0352f] text-[8px] text-white ${MAC}`}>
          {app.badge}
        </span>
      )}
    </button>
  );
}

function Thumb({ kind }) {
  return (
    <button aria-label={`Fenster ${kind + 1}`} className="h-9 w-[34px] pt-2.5">
      <svg viewBox="0 0 34 26" className="w-full" aria-hidden="true">
        <rect y="1" width="33" height="20" fill="#f6f6f6" />
        <path d="M0 1h33v2H0z" fill="#d9d9d9" />
        {kind === 0 && <path d="M13 8h7v2h-7zM11 13h11M13 16h7" fill="#dcb77a" stroke="#ddd" strokeWidth=".8" />}
        {kind === 1 && (
          <>
            <path d="M3 4h15v12H3z" fill="#3c4a50" />
            <circle cx="10" cy="9" r="3" fill="#c4886b" />
            <path d="M5 16c0-5 10-5 10 0z" fill="#e4e4e4" />
            <path d="M20 6h11M20 9h10M20 12h11M3 18h18" stroke="#999" />
          </>
        )}
        {kind === 2 && <path d="M2 6h7M2 9h6M2 12h7M2 15h6M13 6h16M13 9h12M13 12h8" stroke="#bbb" strokeWidth=".8" />}
        {kind < 2 ? (
          <g transform="translate(20 13) scale(.4)">{compass}</g>
        ) : (
          <path d="M22 14l7-1 2 11-7 1z" fill="#3f87cc" stroke="#eee" />
        )}
      </svg>
    </button>
  );
}

function Dock() {
  return (
    <nav aria-label="Dock" className="relative mt-px mr-7 ml-7 flex h-[46px] items-start rounded-t-md bg-linear-to-r from-[#5c5150] from-0% via-[#66605f] via-35% to-[#74798f] to-65% px-[5px]">
      <div className="absolute inset-0 rounded-tr-md bg-linear-to-r from-transparent from-66% via-[#e07750] via-78% to-[#5a6078] to-96%" />
      <div className="relative flex flex-1 justify-between">
        {dockApps.map((a) => (
          <DockIcon key={a.name} app={a} />
        ))}
      </div>
      <span className="relative mt-1.5 ml-3 h-9 w-px bg-[#5c4b50]" />
      <div className="relative ml-2 flex gap-0.5">
        <Thumb kind={0} />
        <Thumb kind={1} />
        <Thumb kind={2} />
      </div>
      <button aria-label="Papierkorb" className="relative mt-1.5 ml-0.5">
        <svg viewBox="0 0 32 32" className="size-8" aria-hidden="true">
          <path d="M6 5h20l-2 25c-3 2-13 2-16 0z" fill="#dfe1e3" />
          <path d="M11 8l2 22M16 8v23M21 8l-2 22" stroke="#c2c6c9" />
          <path d="M6 6l4-4 3 2 4-3 4 2 3-1 2 4-4 3H10z" fill="#f5f6f7" stroke="#9ca0a4" strokeWidth=".7" />
          <path d="M11 5l2 2M18 3l-1 4M22 5l-2 2" stroke="#43586b" strokeWidth="1.500" />
          <path d="M14 3l2 2" stroke="#c24b3a" strokeWidth="1.500" />
        </svg>
      </button>
    </nav>
  );
}

/* ------------------------------------------------------------------ app */

export default function App() {
  return (
    <div className="relative flex h-screen flex-col overflow-hidden">
      <Wallpaper />
      <Gradients />
      <MenuBar />
      <main className="relative mr-[18px] flex min-h-0 flex-1 flex-col overflow-hidden rounded-md">
        <TitleBar />
        <TabBar />
        <QuickBar />
        <UpdateBanner />
        <div className="relative flex min-h-0 flex-1 flex-col overflow-hidden">
          <Scene />
          <ViewCube />
          <div className="relative flex flex-1 flex-col">
            <Ribbon />
            <Browser />
            <div className="mt-auto mb-[5px] ml-1 grid grid-cols-[1fr_auto_1fr] items-center">
              <PanelHead title="KOMMENTARE">
                <svg viewBox="0 0 6 6" className="size-1.5" stroke="#ddd" aria-hidden="true">
                  <path d="M3 0v6M0 3h6" />
                </svg>
              </PanelHead>
              <NavBar />
            </div>
          </div>
        </div>
        <Timeline />
      </main>
      <div className="relative mr-[109px] ml-[191px] flex h-[17px] shrink-0 overflow-hidden rounded-b bg-linear-to-b from-[#858585] to-[#a2a2a2]">
        <span className="w-[26%] border-r border-[#8e8e8e]" />
        <span className="w-[26%]" />
        <span className="flex w-[13%] bg-[#8396a8]">
          <span className="w-1/2 border-r border-[#7a93ad]" />
        </span>
        <span className="border-l border-[#7f98b2] pl-0.5 font-['DejaVu_Sans',sans-serif] text-[10px] leading-[21px] text-[#3c3c3c]">&lt;/h5&gt;</span>
      </div>
      <Dock />
    </div>
  );
}
